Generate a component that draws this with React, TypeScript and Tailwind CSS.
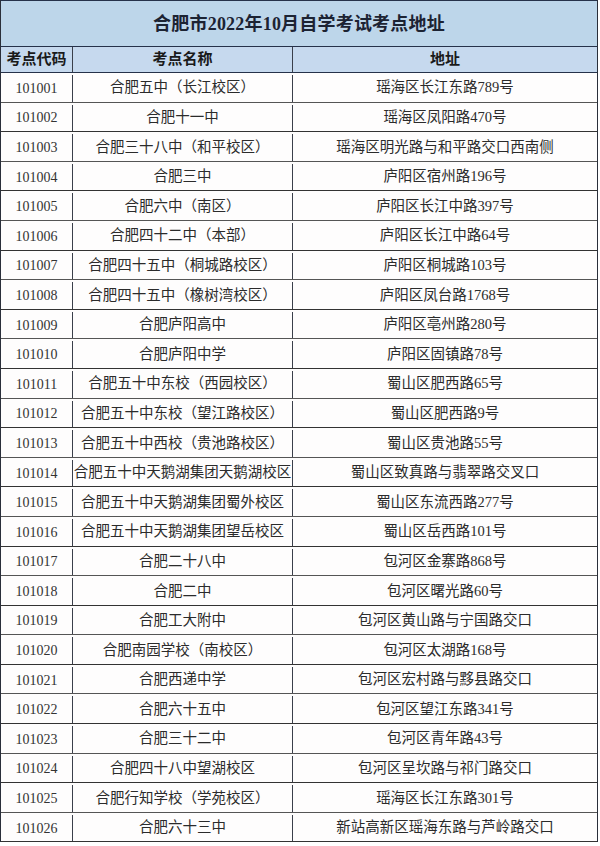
import React from "react";

const rows: [string, string, string][] = [
  ["101001", "合肥五中（长江校区）", "瑶海区长江东路789号"],
  ["101002", "合肥十一中", "瑶海区凤阳路470号"],
  ["101003", "合肥三十八中（和平校区）", "瑶海区明光路与和平路交口西南侧"],
  ["101004", "合肥三中", "庐阳区宿州路196号"],
  ["101005", "合肥六中（南区）", "庐阳区长江中路397号"],
  ["101006", "合肥四十二中（本部）", "庐阳区长江中路64号"],
  ["101007", "合肥四十五中（桐城路校区）", "庐阳区桐城路103号"],
  ["101008", "合肥四十五中（橡树湾校区）", "庐阳区凤台路1768号"],
  ["101009", "合肥庐阳高中", "庐阳区亳州路280号"],
  ["101010", "合肥庐阳中学", "庐阳区固镇路78号"],
  ["101011", "合肥五十中东校（西园校区）", "蜀山区肥西路65号"],
  ["101012", "合肥五十中东校（望江路校区）", "蜀山区肥西路9号"],
  ["101013", "合肥五十中西校（贵池路校区）", "蜀山区贵池路55号"],
  ["101014", "合肥五十中天鹅湖集团天鹅湖校区", "蜀山区致真路与翡翠路交叉口"],
  ["101015", "合肥五十中天鹅湖集团蜀外校区", "蜀山区东流西路277号"],
  ["101016", "合肥五十中天鹅湖集团望岳校区", "蜀山区岳西路101号"],
  ["101017", "合肥二十八中", "包河区金寨路868号"],
  ["101018", "合肥二中", "包河区曙光路60号"],
  ["101019", "合肥工大附中", "包河区黄山路与宁国路交口"],
  ["101020", "合肥南园学校（南校区）", "包河区太湖路168号"],
  ["101021", "合肥西递中学", "包河区宏村路与黟县路交口"],
  ["101022", "合肥六十五中", "包河区望江东路341号"],
  ["101023", "合肥三十二中", "包河区青年路43号"],
  ["101024", "合肥四十八中望湖校区", "包河区呈坎路与祁门路交口"],
  ["101025", "合肥行知学校（学苑校区）", "瑶海区长江东路301号"],
  ["101026", "合肥六十三中", "新站高新区瑶海东路与芦岭路交口"],
];

const font = {
  fontFamily: '"Liberation Serif", "Noto Sans CJK SC", serif',
};

export default function App() {
  return (
    <div className="w-[600px] h-[846px] bg-white overflow-hidden" style={font}>
      <div className="w-[598px] border-l border-r border-[#2a2f3a] flex flex-col">
        <div className="h-[47px] bg-[#bdd6ea] border-t border-b border-[#26324a] flex items-center justify-center pt-[2px]">
          <span className="text-[18px] font-bold text-[#1c2333] tracking-[0.2px]">
            合肥市2022年10月自学考试考点地址
          </span>
        </div>
        <div className="h-[26px] bg-[#c6d9ee] border-b border-[#26324a] flex text-[15px] font-bold text-[#1a1a1a]">
          <div className="w-[72px] border-r border-[#3a3f4a] flex items-center justify-center">考点代码</div>
          <div className="w-[220px] border-r border-[#3a3f4a] flex items-center justify-center">考点名称</div>
          <div className="flex-1 flex items-center justify-center">地址</div>
        </div>
        {rows.map(([code, name, addr], i) => (
          <div
            key={code}
            className={
              "h-[29.6px] flex text-[14.5px] text-[#2b2b2b] bg-[#fefdfd] border-b pt-[2px] " +
              (i % 2 === 0 ? "border-[#555555]" : "border-[#333333]")
            }
          >
            <div className="w-[72px] border-r border-[#3a3f4a] flex items-center justify-center text-[14px] text-[#333]">
              {code}
            </div>
            <div className="w-[220px] border-r border-[#3a3f4a] flex items-center justify-center whitespace-nowrap">
              {name}
            </div>
            <div className="flex-1 flex items-center justify-center whitespace-nowrap">{addr}</div>
          </div>
        ))}
      </div>
    </div>
  );
}
